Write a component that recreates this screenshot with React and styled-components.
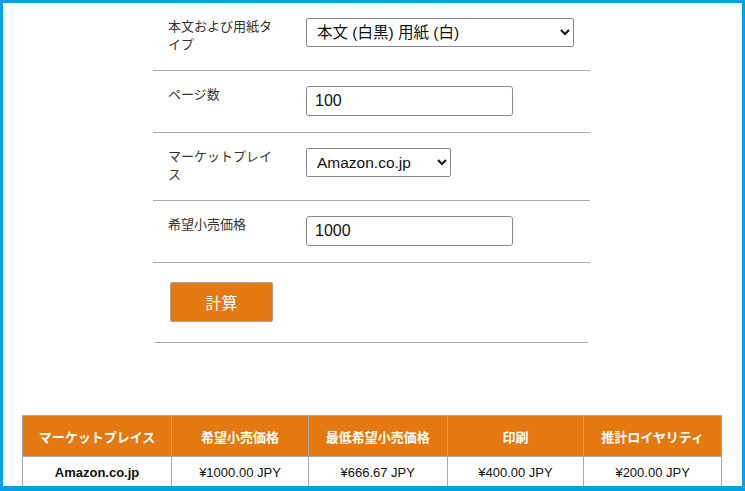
import React, { useState } from "react";
import styled, { createGlobalStyle } from "styled-components";

const GlobalStyle = createGlobalStyle`
  html, body {
    margin: 0;
    padding: 0;
    background: #fff;
  }
  body {
    font-family: "Liberation Sans", Arial, "Noto Sans CJK JP", sans-serif;
    color: #222;
  }
`;

const Frame = styled.div`
  width: 745px;
  height: 491px;
  box-sizing: border-box;
  border: 3px solid #00a2e8;
  border-bottom-width: 5px;
  overflow: hidden;
  background: #fff;
`;

const Form = styled.div`
  width: 437px;
  margin-left: 150px;
`;

const Row = styled.div`
  display: flex;
  align-items: flex-start;
  padding: 15px 15px 16px;
  border-bottom: 1px solid #aaa;
`;

const Label = styled.div`
  width: 110px;
  margin-right: 28px;
  font-size: 13px;
  line-height: 18px;
  color: #333;
`;

const Select = styled.select`
  height: 29px;
  width: ${(p) => p.$width}px;
  box-sizing: border-box;
  font-family: inherit;
  font-size: 15.5px;
  color: #111;
  padding: 0 6px;
  border: 1px solid #8a8a8a;
  border-radius: 2px;
  background: #fff;
`;

const Input = styled.input`
  height: 30px;
  width: 207px;
  box-sizing: border-box;
  font-family: inherit;
  font-size: 16px;
  color: #111;
  padding: 0 8px;
  border: 1px solid #8a8a8a;
  border-radius: 3px;
  background: #fff;
`;

const ButtonRow = styled.div`
  padding: 19px 17px 20px;
`;

const CalcButton = styled.button`
  width: 103px;
  height: 40px;
  background: #e47911;
  color: #fff;
  font-family: inherit;
  font-size: 16px;
  border: 1px solid #b5a08a;
  border-radius: 2px;
  cursor: pointer;
`;

const Rule = styled.div`
  margin: 0 2px;
  border-top: 1px solid #aaa;
`;

const Results = styled.table`
  margin: 72px 0 0 19px;
  width: 700px;
  border-collapse: collapse;
  font-size: 13px;
  text-align: center;
`;

const Th = styled.th`
  width: ${(p) => p.$width}px;
  height: 40px;
  padding: 0;
  background: #e47911;
  color: #fff;
  font-weight: bold;
  border: 1px solid #aaa;
`;

const Td = styled.td`
  height: 30px;
  padding: 0;
  color: #111;
  font-weight: ${(p) => (p.$bold ? "bold" : "normal")};
  border: 1px solid #aaa;
`;

const columns = [
  { title: "マーケットプレイス", width: 149 },
  { title: "希望小売価格", width: 137 },
  { title: "最低希望小売価格", width: 139 },
  { title: "印刷", width: 137 },
  { title: "推計ロイヤリティ", width: 138 },
];

export default function App() {
  const [pages, setPages] = useState("100");
  const [price, setPrice] = useState("1000");

  return (
    <>
      <GlobalStyle />
      <Frame>
        <Form>
          <Row>
            <Label>本文および用紙タイプ</Label>
            <Select $width={268} defaultValue="bw">
              <option value="bw">本文 (白黒) 用紙 (白)</option>
              <option value="bwc">本文 (白黒) 用紙 (クリーム)</option>
              <option value="color">本文 (カラー) 用紙 (白)</option>
            </Select>
          </Row>
          <Row>
            <Label>ページ数</Label>
            <Input value={pages} onChange={(e) => setPages(e.target.value)} />
          </Row>
          <Row>
            <Label>マーケットプレイス</Label>
            <Select $width={145} defaultValue="jp">
              <option value="jp">Amazon.co.jp</option>
              <option value="com">Amazon.com</option>
            </Select>
          </Row>
          <Row>
            <Label>希望小売価格</Label>
            <Input value={price} onChange={(e) => setPrice(e.target.value)} />
          </Row>
          <ButtonRow>
            <CalcButton>計算</CalcButton>
          </ButtonRow>
          <Rule />
        </Form>

        <Results>
          <thead>
            <tr>
              {columns.map((c) => (
                <Th key={c.title} $width={c.width}>
                  {c.title}
                </Th>
              ))}
            </tr>
          </thead>
          <tbody>
            <tr>
              <Td $bold>Amazon.co.jp</Td>
              <Td>¥1000.00 JPY</Td>
              <Td>¥666.67 JPY</Td>
              <Td>¥400.00 JPY</Td>
              <Td>¥200.00 JPY</Td>
            </tr>
          </tbody>
        </Results>
      </Frame>
    </>
  );
}
